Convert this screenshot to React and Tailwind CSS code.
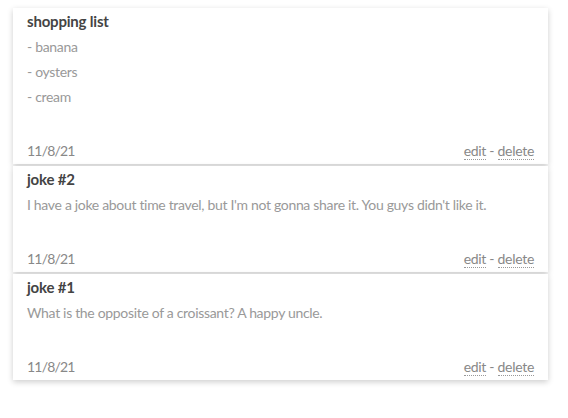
const notes = [
    { title: 'shopping list', lines: ['- banana', '- oysters', '- cream'], date: '11/8/21' },
    { title: 'joke #2', lines: ["I have a joke about time travel, but I'm not gonna share it. You guys didn't like it."], date: '11/8/21' },
    { title: 'joke #1', lines: ['What is the opposite of a croissant? A happy uncle.'], date: '11/8/21' },
];

export default function App() {
    return (
        <div className="min-h-[418px] bg-white pt-[8px] pl-[13px] font-['Lato',sans-serif] text-[14px]">
            <div className="flex w-[535px] flex-col gap-[2px]">
                {notes.map(note => (
                    <div key={note.title} className="bg-white px-[14px] pt-[3px] pb-[3px] shadow-[0_2px_6px_rgba(0,0,0,0.2)]">
                        <h3 className="text-[15px] font-bold leading-[20px] tracking-[-0.2px] text-[#444]">{note.title}</h3>
                        <div className="mt-[3px] tracking-[-0.32px] text-[#999]">
                            {note.lines.map(line => (
                                <p key={line} className="leading-[25px]">{line}</p>
                            ))}
                        </div>
                        <div className="mt-[32px] flex items-center justify-between leading-[20px] text-[#888]">
                            <span className="tracking-[-0.8px]">{note.date}</span>
                            <span className="tracking-[-0.3px]">
                                <a className="border-b border-dotted border-[#999] leading-[16px]">edit</a>
                                {' - '}
                                <a className="border-b border-dotted border-[#999] leading-[16px]">delete</a>
                            </span>
                        </div>
                    </div>
                ))}
            </div>
        </div>
    );
}
